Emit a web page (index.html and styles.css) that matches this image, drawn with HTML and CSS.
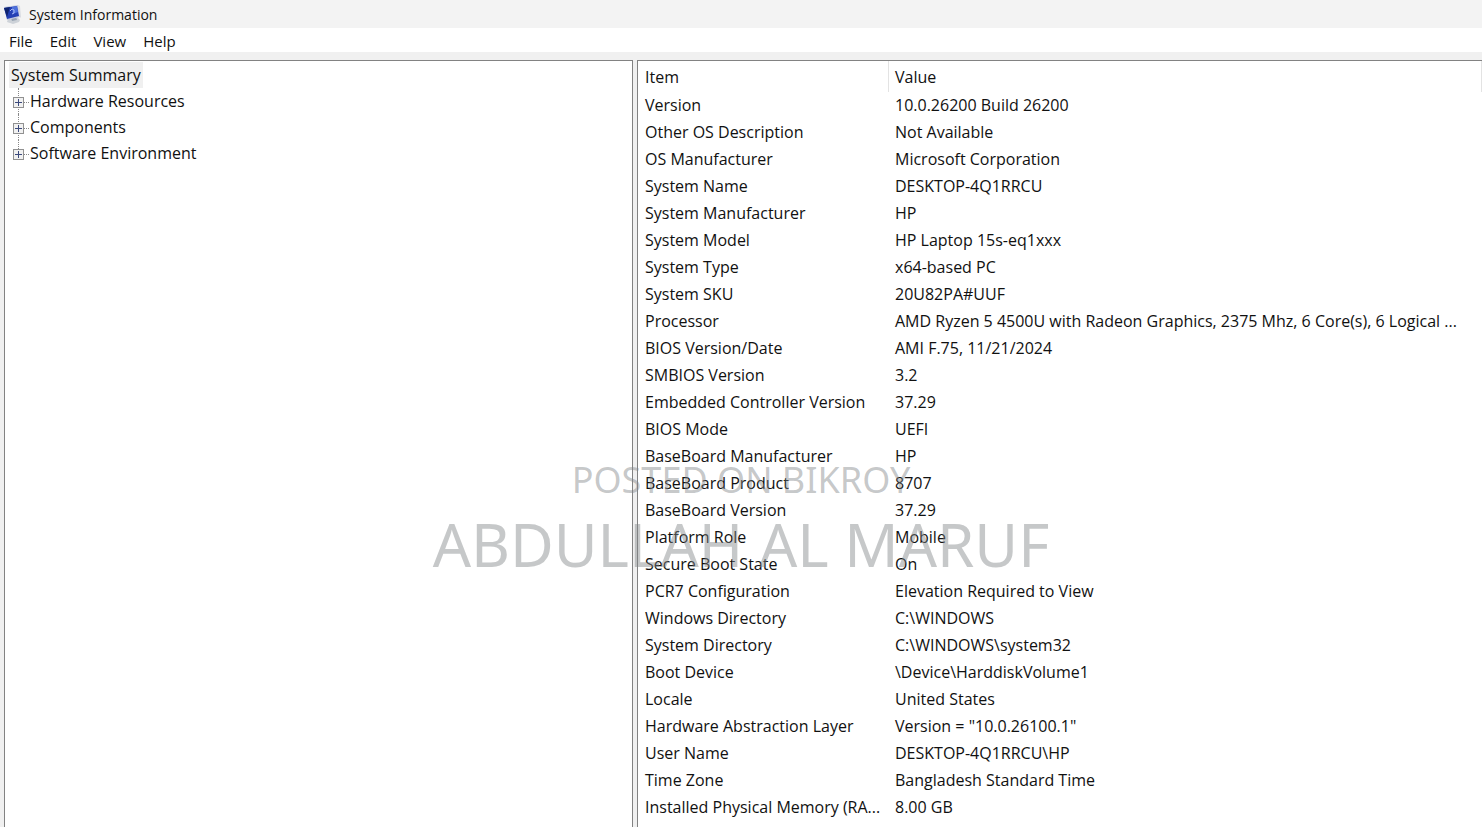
FILE: index.html
```
<!DOCTYPE html>
<html lang="en">
  <head>
    <meta charset="UTF-8" />
    <meta name="viewport" content="width=device-width, initial-scale=1.0" />
    <title>System Information</title>
    <link rel="stylesheet" href="styles.css">
  </head>
  <body>
    <header class="title-bar">
      <svg class="app-icon" viewBox="0 0 18 20" aria-hidden="true">
        <path d="M5 15l9-2 3 3-1 2-6 2-6-2z" fill="#cdd2d8" />
        <path d="M8 14l5-1 1 3-5 1z" fill="#98a3b3" />
        <path d="M1 3l14-2 2 12-13 3z" fill="#c4cbe0" />
        <path d="M15 1l2 1 1 11-1 1z" fill="#d9dce2" />
        <path d="M1 4l13-2 2 10-12 3z" fill="#2440b4" />
        <path d="M1 4l6-1-3 10z" fill="#10246f" />
        <path d="M9 3l5-1 1 6-5 2z" fill="#4d70dc" />
        <path d="M7 7l2-2 2 1v3l-2 1" fill="none" stroke="#a9baf4" />
      </svg>
      <h1 class="title">System Information</h1>
    </header>
    <nav class="menu-bar">
      <button type="button" class="menu-item">File</button>
      <button type="button" class="menu-item">Edit</button>
      <button type="button" class="menu-item">View</button>
      <button type="button" class="menu-item">Help</button>
    </nav>
    <main class="panes">
      <section class="pane tree-pane">
        <button type="button" class="tree-root">System Summary</button>
        <ul class="tree">
          <li class="tree-item">
            <button type="button" class="expander" aria-label="Expand Hardware Resources"></button>
            <span class="tree-label">Hardware Resources</span>
          </li>
          <li class="tree-item">
            <button type="button" class="expander" aria-label="Expand Components"></button>
            <span class="tree-label">Components</span>
          </li>
          <li class="tree-item">
            <button type="button" class="expander" aria-label="Expand Software Environment"></button>
            <span class="tree-label">Software Environment</span>
          </li>
        </ul>
      </section>
      <section class="pane">
        <table class="details">
          <thead>
            <tr><th class="col-item">Item</th><th>Value</th></tr>
          </thead>
          <tbody>
            <tr><td>Version</td><td>10.0.26200 Build 26200</td></tr>
            <tr><td>Other OS Description</td><td>Not Available</td></tr>
            <tr><td>OS Manufacturer</td><td>Microsoft Corporation</td></tr>
            <tr><td>System Name</td><td>DESKTOP-4Q1RRCU</td></tr>
            <tr><td>System Manufacturer</td><td>HP</td></tr>
            <tr><td>System Model</td><td>HP Laptop 15s-eq1xxx</td></tr>
            <tr><td>System Type</td><td>x64-based PC</td></tr>
            <tr><td>System SKU</td><td>20U82PA#UUF</td></tr>
            <tr><td>Processor</td><td>AMD Ryzen 5 4500U with Radeon Graphics, 2375 Mhz, 6 Core(s), 6 Logical ...</td></tr>
            <tr><td>BIOS Version/Date</td><td>AMI F.75, 11/21/2024</td></tr>
            <tr><td>SMBIOS Version</td><td>3.2</td></tr>
            <tr><td>Embedded Controller Version</td><td>37.29</td></tr>
            <tr><td>BIOS Mode</td><td>UEFI</td></tr>
            <tr><td>BaseBoard Manufacturer</td><td>HP</td></tr>
            <tr><td>BaseBoard Product</td><td>8707</td></tr>
            <tr><td>BaseBoard Version</td><td>37.29</td></tr>
            <tr><td>Platform Role</td><td>Mobile</td></tr>
            <tr><td>Secure Boot State</td><td>On</td></tr>
            <tr><td>PCR7 Configuration</td><td>Elevation Required to View</td></tr>
            <tr><td>Windows Directory</td><td>C:\WINDOWS</td></tr>
            <tr><td>System Directory</td><td>C:\WINDOWS\system32</td></tr>
            <tr><td>Boot Device</td><td>\Device\HarddiskVolume1</td></tr>
            <tr><td>Locale</td><td>United States</td></tr>
            <tr><td>Hardware Abstraction Layer</td><td>Version = "10.0.26100.1"</td></tr>
            <tr><td>User Name</td><td>DESKTOP-4Q1RRCU\HP</td></tr>
            <tr><td>Time Zone</td><td>Bangladesh Standard Time</td></tr>
            <tr><td>Installed Physical Memory (RA...</td><td>8.00 GB</td></tr>
          </tbody>
        </table>
      </section>
    </main>
    <div class="watermark">
      <p class="watermark-site">POSTED ON BIKROY</p>
      <p class="watermark-name">ABDULLAH AL MARUF</p>
    </div>
  </body>
</html>
```

FILE: styles.css
```
* {
  box-sizing: border-box;
}
body {
  margin: 0;
  height: 100vh;
  overflow: hidden;
  display: flex;
  flex-direction: column;
  position: relative;
  background: #f0f0f0;
  color: #111;
  font-family: "Open Sans", "Noto Sans", sans-serif;
  font-size: 16px;
}
button {
  border: none;
  background: none;
  padding: 0;
  margin: 0;
  color: inherit;
  font: inherit;
}

.title-bar {
  display: flex;
  align-items: center;
  gap: 8px;
  height: 28px;
  padding: 0 3px;
  background: #f3f3f3;
}
.app-icon {
  width: 18px;
  height: 20px;
}
.title {
  margin: 0;
  font-size: 14px;
  font-weight: normal;
}
.menu-bar {
  display: flex;
  gap: 17px;
  height: 24px;
  padding: 2px 9px 0;
  background: #fff;
  font-size: 15px;
}

.panes {
  flex: 1;
  min-height: 0;
  display: grid;
  grid-template-columns: minmax(0, 629fr) minmax(0, 845fr);
  gap: 4px;
  padding: 8px 0 0 4px;
}
.pane {
  overflow: hidden;
  background: #fff;
  border: 1px solid #828282;
  border-bottom: none;
}
.pane:last-child {
  border-right: none;
}

.tree-pane {
  padding: 1px 4px;
}
.tree-root {
  display: block;
  height: 26px;
  padding: 0 2px;
  background: #f0f0f0;
}
.tree {
  margin: 0;
  padding: 0 0 0 4px;
  list-style: none;
}
.tree-item {
  display: flex;
  align-items: center;
  height: 26px;
  position: relative;
}
/* dotted connector lines */
.tree-item::before {
  content: "";
  position: absolute;
  left: 5px;
  top: 0;
  height: 26px;
  border-left: 1px dotted #888;
}
.tree-item:last-child::before {
  height: 13px;
}
.tree-item::after {
  content: "";
  position: absolute;
  left: 11px;
  top: 14px;
  width: 5px;
  border-top: 1px dotted #888;
}
.expander {
  position: relative;
  z-index: 1;
  width: 11px;
  height: 11px;
  margin: 2px 6px 0 0;
  border: 1px solid #919191;
  background:
    linear-gradient(#3c4a7c, #3c4a7c) center / 7px 1px no-repeat,
    linear-gradient(#3c4a7c, #3c4a7c) center / 1px 7px no-repeat,
    #f1f1f1;
}

.details {
  width: 100%;
  table-layout: fixed;
  border-collapse: separate;
  border-spacing: 0;
}
.details th,
.details td {
  height: 27px;
  padding: 0 7px;
  font-weight: normal;
  line-height: 27px;
  text-align: left;
  white-space: nowrap;
  overflow: hidden;
}
.details td {
  padding-right: 0;
}
.details th {
  height: 31px;
  padding-top: 2px;
  border-right: 1px solid #e3e3e3;
}
.details th + th,
.details td + td {
  padding-left: 6px;
}
.col-item {
  width: 251px;
}

.watermark {
  position: absolute;
  top: 456px;
  left: 0;
  width: 100%;
  color: rgba(128, 132, 135, 0.45);
  font-family: "Noto Sans", sans-serif;
  text-align: center;
  pointer-events: none;
}
.watermark p {
  margin: 0;
}
.watermark-site {
  font-size: 36px;
  line-height: 48px;
}
.watermark-name {
  font-size: 60px;
  line-height: 80px;
}
```
